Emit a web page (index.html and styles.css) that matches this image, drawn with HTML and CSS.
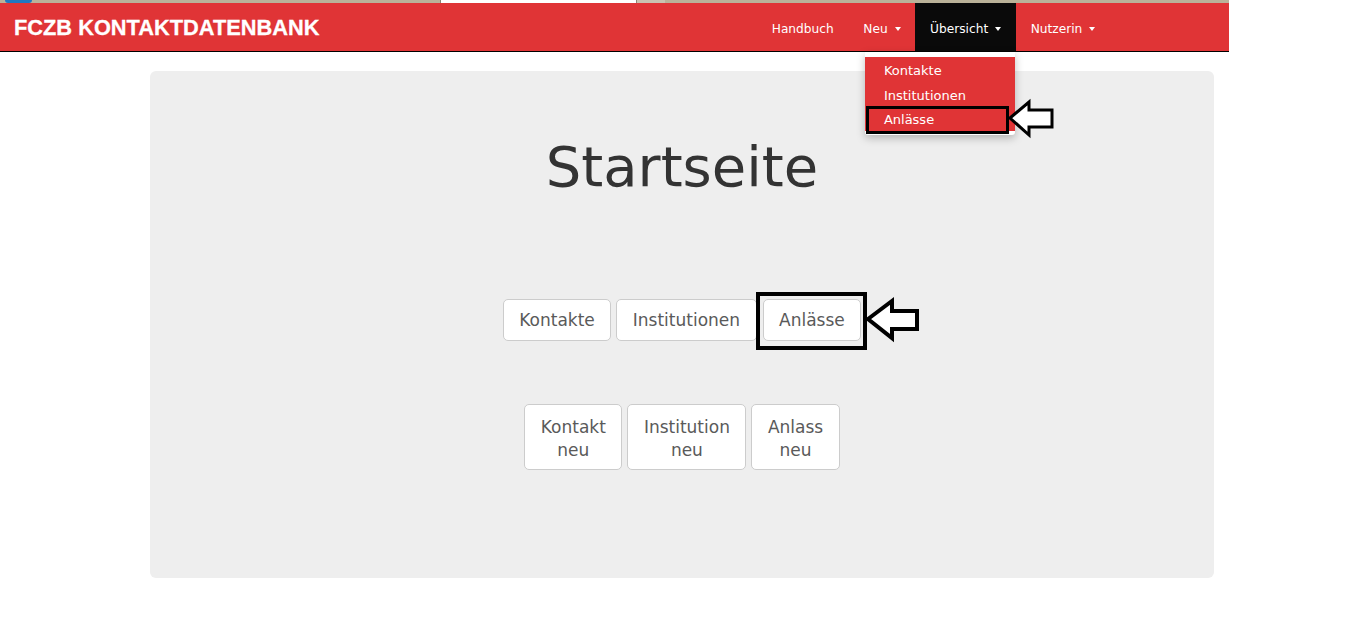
FILE: index.html
```html
<!DOCTYPE html>
<html lang="de">
<head>
<meta charset="utf-8">
<title>FCZB Kontaktdatenbank</title>
<link rel="stylesheet" href="styles.css">
</head>
<body>
<div class="chrome">
  <span class="chrome-blue"></span>
  <span class="chrome-tab"></span>
  <span class="chrome-light"></span>
</div>
<nav class="navbar">
  <a class="brand" href="#">FCZB KONTAKTDATENBANK</a>
  <ul class="nav">
    <li class="nav-item"><a href="#">Handbuch</a></li>
    <li class="nav-item"><a href="#">Neu <span class="caret"></span></a></li>
    <li class="nav-item active"><a href="#">Übersicht <span class="caret"></span></a>
      <div class="dropdown">
        <ul class="dropdown-list">
          <li><a href="#">Kontakte</a></li>
          <li><a href="#">Institutionen</a></li>
          <li><a href="#">Anlässe</a></li>
        </ul>
        <span class="mark mark-menu"></span>
        <svg class="arrow arrow-menu" width="48" height="38" viewBox="0 0 48 38">
          <path d="M2 18 L21 2 L21 10 L44 10 L44 27 L21 27 L21 35 Z" fill="#fff" stroke="#000" stroke-width="3" stroke-linejoin="miter"/>
        </svg>
      </div>
    </li>
    <li class="nav-item"><a href="#">Nutzerin <span class="caret"></span></a></li>
  </ul>
</nav>
<main class="page">
  <section class="jumbotron">
    <h1 class="title">Startseite</h1>
    <div class="btn-row row-one">
      <a class="btn" href="#">Kontakte</a>
      <a class="btn" href="#">Institutionen</a>
      <span class="marked">
        <a class="btn" href="#">Anlässe</a>
        <span class="mark mark-btn"></span>
        <svg class="arrow arrow-btn" width="56" height="44" viewBox="0 0 56 44">
          <path d="M3 21 L27 3 L27 13 L52 13 L52 31 L27 31 L27 40 Z" fill="#fff" stroke="#000" stroke-width="4" stroke-linejoin="miter"/>
        </svg>
      </span>
    </div>
    <div class="btn-row row-two">
      <a class="btn" href="#">Kontakt<br>neu</a>
      <a class="btn" href="#">Institution<br>neu</a>
      <a class="btn" href="#">Anlass<br>neu</a>
    </div>
  </section>
</main>
</body>
</html>
```
FILE: styles.css
```css
* { box-sizing: border-box; }
html, body { margin: 0; padding: 0; background: #fff; }
body { font-family: "DejaVu Sans", Verdana, sans-serif; color: #333; }
a { text-decoration: none; }

.chrome {
  width: 1229px;
  height: 3px;
  background: #bab299;
  display: flex;
  position: relative;
}
.chrome-blue { width: 27px; height: 3px; margin-left: 5px; background: #1f78c1; border-radius: 0 0 3px 3px; }
.chrome-tab { width: 197px; height: 3px; margin-left: 408px; background: #fff; border-left: 1px solid #8a8676; border-right: 1px solid #8a8676; }
.chrome-light { width: 28px; height: 3px; background: #c9c3b1; }

.navbar {
  width: 1229px;
  height: 49px;
  background: #e03436;
  border-bottom: 1px solid #000;
  display: flex;
  align-items: stretch;
  padding-right: 119px;
}
.brand {
  color: #fff;
  font-family: "Liberation Sans", Arial, sans-serif;
  font-weight: bold;
  font-size: 21.8px;
  line-height: 48px;
  padding: 1px 0 0 14px;
  -webkit-text-stroke: 0.3px #fff;
}
.nav {
  list-style: none;
  margin: 0 0 0 auto;
  padding: 0;
  display: flex;
}
.nav-item { position: relative; }
.nav-item > a {
  display: block;
  height: 48px;
  color: #fff;
  font-size: 12.2px;
  line-height: 48px;
  padding: 2px 14.8px 0;
}
.nav-item.active > a { background: #0a0a0a; }
.caret {
  display: inline-block;
  width: 0; height: 0;
  border-left: 3.5px solid transparent;
  border-right: 3.5px solid transparent;
  border-top: 4px solid #fff;
  vertical-align: middle;
  margin-left: 3px;
  margin-top: -2px;
}

.dropdown {
  position: absolute;
  top: 49px;
  right: 1px;
  width: 150px;
  background: #fff;
  padding: 5px 0 4px;
  box-shadow: 0 3px 8px rgba(0,0,0,0.25);
  border-radius: 0 0 3px 3px;
  z-index: 5;
}
.dropdown-list { list-style: none; margin: 0; padding: 0; background: #e03436; }
.dropdown-list a {
  display: block;
  color: #fff;
  font-size: 13px;
  line-height: 18.7px;
  padding: 5px 19px 1px;
}
.mark {
  position: absolute;
  border: 3px solid #000;
  pointer-events: none;
}
.mark-menu { left: 1px; top: 54px; width: 143px; height: 28px; }
.arrow { position: absolute; overflow: visible; }
.arrow-menu { left: 143px; top: 48px; }

.page { padding: 19px 0 0 150px; }
.jumbotron {
  width: 1064px;
  background: #eeeeee;
  border-radius: 6px;
  padding: 65px 0 108px;
  text-align: center;
}
.title {
  margin: 0;
  font-weight: normal;
  font-size: 56px;
  line-height: 62px;
  color: #333;
}
.btn-row { display: flex; justify-content: center; gap: 5px; }
.row-one { margin-top: 101px; }
.row-two { margin-top: 63px; }
.btn {
  display: inline-block;
  background: #fff;
  border: 1px solid #ccc;
  border-radius: 5px;
  color: #5a5a5a;
  font-size: 17px;
  line-height: 23px;
  padding: 9px 15.5px 8px;
}
.row-two .btn { padding: 11px 15.5px 7px; }
.marked { position: relative; display: inline-block; margin-left: 1px; }
.mark-btn { left: -7px; top: -7px; width: 111px; height: 58px; border-width: 4px; }
.arrow-btn { left: 102px; top: -1px; }
```
